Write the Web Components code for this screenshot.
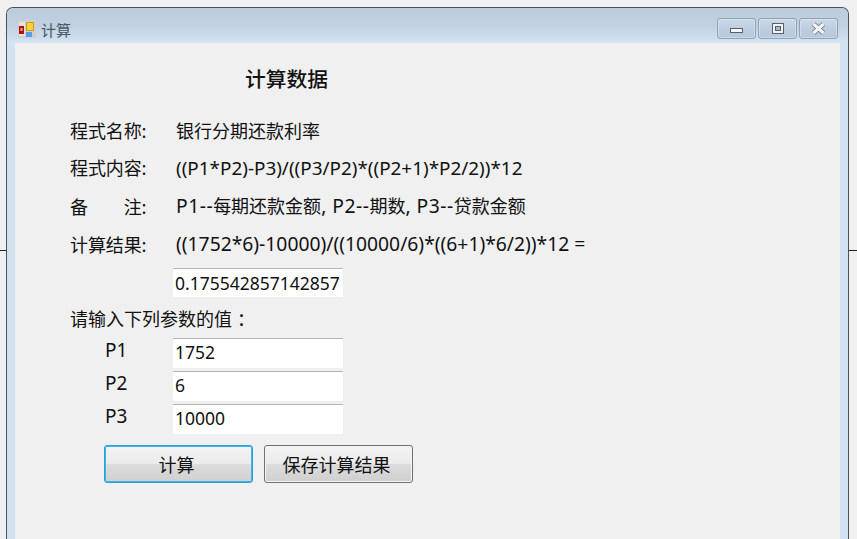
<!DOCTYPE html>
<html lang="zh">
<head>
<meta charset="utf-8">
<style>
html,body{margin:0;padding:0;height:539px;overflow:hidden;background:#f0f0f0}
body{font-family:"Noto Sans CJK SC",sans-serif;color:#111;position:relative}
.rule{position:absolute;left:0;right:0;top:250px;height:1px;background:#222}
.la{font:19.3px "Noto Sans",sans-serif}
.la.narrow{font-size:18.9px}
.la.spaced{letter-spacing:.5px}
.colon{margin-left:5px}
</style>
</head>
<body>
<div class="rule"></div>
<calc-window caption="计算">
  <calc-heading>计算数据</calc-heading>
  <calc-row label="程式名称:" style="height:37.5px">银行分期还款利率</calc-row>
  <calc-row label="程式内容:" style="height:37.5px"><span class="la narrow">((P1*P2)-P3)/((P3/P2)*((P2+1)*P2/2))*12</span></calc-row>
  <calc-row label="备&emsp;&emsp;注:" style="height:39px"><span class="la spaced">P1--</span>每期还款金额<span class="la spaced">, P2--</span>期数<span class="la spaced">, P3--</span>贷款金额</calc-row>
  <calc-row label="计算结果:" style="height:37px"><span class="la">((1752*6)-10000)/((10000/6)*((6+1)*6/2))*12 =</span></calc-row>
  <calc-field class="result" value="0.175542857142857"></calc-field>
  <calc-prompt>请输入下列参数的值<span class="colon">：</span></calc-prompt>
  <calc-field label="P1" value="1752"></calc-field>
  <calc-field label="P2" value="6"></calc-field>
  <calc-field label="P3" value="10000"></calc-field>
  <calc-actions>
    <calc-button focused>计算</calc-button>
    <calc-button>保存计算结果</calc-button>
  </calc-actions>
</calc-window>
<script>
function shadow(el, html){ el.attachShadow({mode:'open'}).innerHTML = html; }
function esc(s){ return (s||'').replace(/&/g,'&amp;').replace(/</g,'&lt;'); }

customElements.define('calc-window', class extends HTMLElement{
  connectedCallback(){ if(this.shadowRoot) return;
    shadow(this, `<style>
      :host{display:block;position:relative;margin:7px 8px 0 6px;height:532px;overflow:hidden;box-sizing:border-box;
        border:1px solid #4c5157;border-bottom:0;border-radius:7px 7px 0 0;background:#d3e2f2}
      .bar{height:35px;box-sizing:border-box;padding:7px 10px 0 11px;display:flex;align-items:center;border-radius:6px 6px 0 0;
        background:linear-gradient(#bccbdc,#c3d2e2 55%,#d5e4f4)}
      .ico{width:18px;height:18px;flex:none}
      .cap{margin-left:5px;font:15px "Noto Sans CJK SC",sans-serif;color:#4b5663;flex:1}
      .btns{display:flex;gap:2px;margin-top:-1px}
      .b{width:39px;height:21px;box-sizing:border-box;border:1px solid #8ea2b8;border-radius:3px;
        background:linear-gradient(#cbd8e6,#bdcddf 55%,#b7c8db);display:flex;align-items:center;justify-content:center;
        box-shadow:inset 0 0 0 1px rgba(255,255,255,.3)}
      .client{margin:0 8px;height:497px;background:#f0f0f0;padding:0 0 0 55px}
    </style>
    <div class="bar">
      <svg class="ico" viewBox="0 0 18 18">
        <rect x="0" y="0" width="18" height="18" fill="#cfcfcf"/>
        <rect x="1" y="2" width="6" height="14" fill="#e2e2e2"/>
        <rect x="1" y="6" width="5" height="8" fill="#b01208"/>
        <rect x="2.5" y="8" width="2" height="3" fill="#f0b090"/>
        <rect x="8.5" y="2.5" width="7" height="8" fill="#f6d23c" stroke="#cf9a12"/>
        <rect x="8" y="12" width="6" height="5" fill="#5a9be8"/>
      </svg>
      <span class="cap"></span>
      <div class="btns">
        <div class="b"><svg width="14" height="8" viewBox="0 0 14 8" style="margin-top:6px"><rect x=".5" y=".5" width="12" height="4" fill="#f6f6f6" stroke="#56606c"/></svg></div>
        <div class="b"><svg width="12" height="11" viewBox="0 0 12 11"><rect x=".5" y=".5" width="11" height="10" fill="#f2f2f2" stroke="#56606c"/><rect x="3.5" y="3.5" width="5" height="4" fill="#a9b6c4" stroke="#56606c"/></svg></div>
        <div class="b"><svg width="15" height="13" viewBox="0 0 15 13"><path d="M2.5 2 12.5 11 M12.5 2 2.5 11" stroke="#6d7783" stroke-width="5"/><path d="M2.5 2 12.5 11 M12.5 2 2.5 11" stroke="#f4f4f4" stroke-width="3.2"/></svg></div>
      </div>
    </div>
    <div class="client"><slot></slot></div>`);
    this.shadowRoot.querySelector('.cap').textContent = this.getAttribute('caption');
  }
});

customElements.define('calc-heading', class extends HTMLElement{
  connectedCallback(){ if(this.shadowRoot) return;
    shadow(this, `<style>:host{display:block;height:68px;padding:21px 0 0 175px;box-sizing:border-box;
      font:500 20.75px/28px "Noto Sans CJK SC",sans-serif;color:#111}</style><slot></slot>`);
  }
});

customElements.define('calc-row', class extends HTMLElement{
  connectedCallback(){ if(this.shadowRoot) return;
    shadow(this, `<style>:host{display:grid;grid-template-columns:106px 1fr;height:37.5px;align-items:center;white-space:nowrap;
      font:18px "Noto Sans CJK SC",sans-serif}
      .l{letter-spacing:-.1px}
      </style><span class="l">${this.getAttribute('label')}</span><span><slot></slot></span>`);
  }
});

customElements.define('calc-prompt', class extends HTMLElement{
  connectedCallback(){ if(this.shadowRoot) return;
    shadow(this, `<style>:host{display:block;height:24px;margin:8px 0;white-space:nowrap;
      font:18px/24px "Noto Sans CJK SC",sans-serif}</style><slot></slot>`);
  }
});

customElements.define('calc-field', class extends HTMLElement{
  connectedCallback(){ if(this.shadowRoot) return;
    const label = this.getAttribute('label') || '';
    shadow(this, `<style>:host{display:grid;grid-template-columns:35px 67px 172px;height:31px;margin-bottom:2px;
      font:17.5px "Noto Sans",sans-serif;color:#111;align-items:center}
      :host(.result){margin-top:6px;height:30px;margin-bottom:0}
      .l{grid-column:2;transform:translateY(-4px);font-size:19px}
      .box{grid-column:3;box-sizing:border-box;height:100%;background:#fff;border:1px solid #eceef0;border-top-color:#b4b4b4;
        border-radius:2px;padding:0 2px 3px;display:flex;align-items:center;white-space:nowrap;overflow:hidden}
      :host(.result) .box{padding-bottom:0}
      </style><span class="l">${esc(label)}</span><div class="box">${esc(this.getAttribute('value'))}</div>`);
  }
});

customElements.define('calc-actions', class extends HTMLElement{
  connectedCallback(){ if(this.shadowRoot) return;
    shadow(this, `<style>:host{display:flex;gap:11px;margin:10px 0 0 34px}</style><slot></slot>`);
  }
});

customElements.define('calc-button', class extends HTMLElement{
  connectedCallback(){ if(this.shadowRoot) return;
    shadow(this, `<style>:host{display:flex;width:149px;height:38px;box-sizing:border-box;align-items:center;justify-content:center;
      padding-right:4px;
      border:1px solid #707070;border-radius:3px;
      background:linear-gradient(#f3f3f3,#ebebeb 49%,#dddddd 50%,#cfcfcf);
      box-shadow:inset 0 0 0 1px #f5f5f5;
      font:18px "Noto Sans CJK SC",sans-serif;color:#111}
      :host([focused]){border-color:#2aa0d8;box-shadow:inset 0 0 0 1px #3fb5e6}
      </style><slot></slot>`);
  }
});
</script>
</body>
</html>
